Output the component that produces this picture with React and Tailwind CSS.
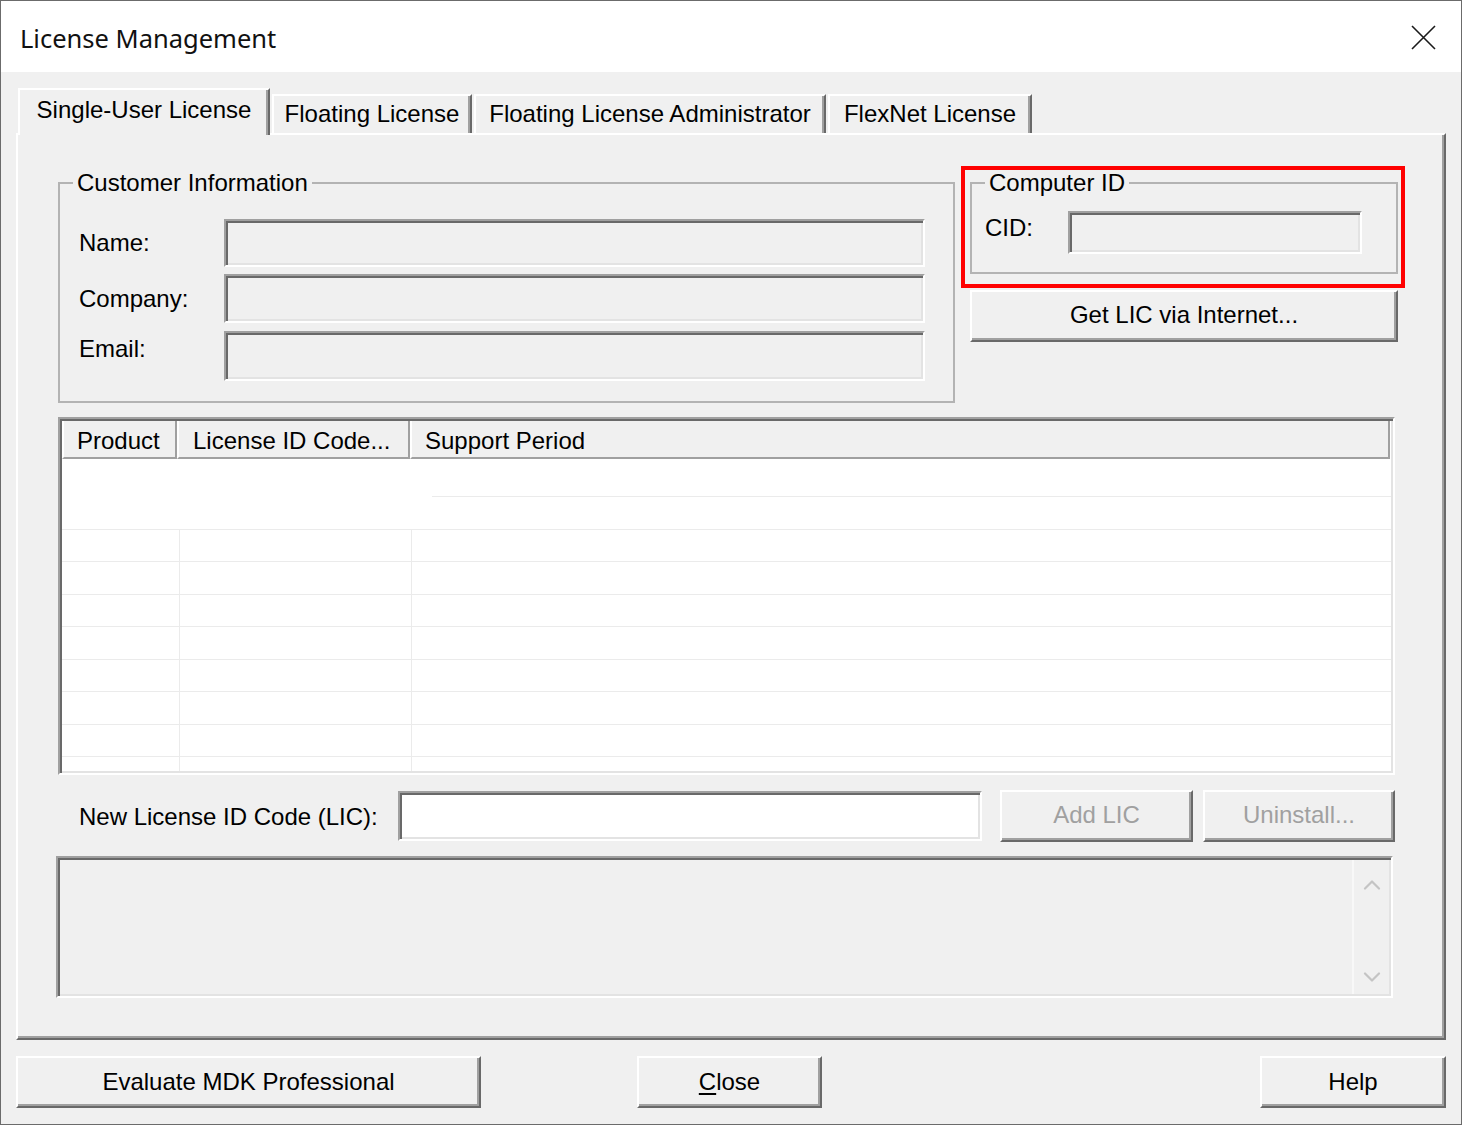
import React from "react";

const raised =
  "bg-[#f0f0f0] border-2 border-t-white border-l-white border-r-[#696969] border-b-[#696969] shadow-[inset_-2px_-2px_0_#a0a0a0]";
const sunken =
  "border-2 border-t-[#a0a0a0] border-l-[#a0a0a0] border-r-white border-b-white shadow-[inset_2px_2px_0_#696969,inset_-2px_-2px_0_#e3e3e3]";

function Button({ className = "", disabled = false, children }) {
  return (
    <div
      className={`${raised} h-[52px] flex items-center justify-center leading-[28px] ${
        disabled ? "text-[#a0a0a0]" : "text-black"
      } ${className}`}
    >
      {children}
    </div>
  );
}

function Field({ className = "" }) {
  return <div className={`${sunken} bg-[#f0f0f0] ${className}`} />;
}

function Chevron({ up }) {
  return (
    <svg width="18" height="11" viewBox="0 0 18 11" fill="none">
      <path
        d={up ? "M2 9.5 L9 2.5 L16 9.5" : "M2 1.5 L9 8.5 L16 1.5"}
        stroke="#c4c4c4"
        strokeWidth="2.2"
        strokeLinecap="round"
        strokeLinejoin="round"
      />
    </svg>
  );
}

export default function App() {
  return (
    <div className="relative w-[1462px] h-[1125px] border border-[#6b6b6b] bg-[#f0f0f0] flex flex-col font-['Liberation_Sans',Arial,sans-serif] text-[24px] text-black overflow-hidden">
      {/* Title bar */}
      <div className="h-[71px] shrink-0 bg-white flex items-center justify-between pl-[19px] pr-[25px]">
        <span className="font-['Noto_Sans',sans-serif] text-[25.5px] leading-[32px] text-[#111] pt-[3px]">
          License Management
        </span>
        <svg width="25" height="25" viewBox="0 0 25 25" className="mt-[1px]">
          <path d="M1 1 L24 24 M24 1 L1 24" stroke="#1a1a1a" strokeWidth="1.6" />
        </svg>
      </div>

      {/* Body */}
      <div className="flex-1 flex flex-col px-[15px] pt-[16px]">
        {/* Tabs */}
        <div className="h-[45px] shrink-0 flex items-end">
          <div className="relative z-10 ml-[2px] -mb-[2px] w-[252px] h-[47px] bg-[#f0f0f0] border-t-2 border-l-2 border-r-2 border-t-white border-l-white border-r-[#696969] shadow-[inset_-2px_0_0_#a0a0a0] pt-[6px] text-center leading-[28px]">
            Single-User License
          </div>
          <div className="ml-[2px] w-[200px] h-[39px] border-t-2 border-l-2 border-r-2 border-t-white border-l-white border-r-[#696969] shadow-[inset_-2px_0_0_#a0a0a0] pt-[4px] text-center leading-[28px]">
            Floating License
          </div>
          <div className="ml-[2px] w-[352px] h-[39px] border-t-2 border-l-2 border-r-2 border-t-white border-l-white border-r-[#696969] shadow-[inset_-2px_0_0_#a0a0a0] pt-[4px] text-center leading-[28px]">
            Floating License Administrator
          </div>
          <div className="ml-[2px] w-[204px] h-[39px] border-t-2 border-l-2 border-r-2 border-t-white border-l-white border-r-[#696969] shadow-[inset_-2px_0_0_#a0a0a0] pt-[4px] text-center leading-[28px]">
            FlexNet License
          </div>
        </div>

        {/* Panel */}
        <div className="h-[907px] shrink-0 bg-[#f0f0f0] border-2 border-t-white border-l-white border-r-[#696969] border-b-[#696969] shadow-[inset_-2px_-2px_0_#a0a0a0] pl-[40px] pt-[34px] flex flex-col">
          {/* Top section */}
          <div className="flex items-start gap-[15px]">
            <fieldset className="w-[897px] border-2 border-[#b3b3b3] pl-[19px] pr-[28px] pt-[22px] pb-[20px]">
              <legend className="-ml-[6px] px-[4px] leading-[28px]">Customer Information</legend>
              <div className="flex flex-col">
                <div className="flex items-center">
                  <span className="w-[145px] leading-[28px]">Name:</span>
                  <Field className="w-[701px] h-[48px]" />
                </div>
                <div className="flex items-center mt-[7px]">
                  <span className="w-[145px] leading-[28px]">Company:</span>
                  <Field className="w-[701px] h-[49px]" />
                </div>
                <div className="flex items-center mt-[8px]">
                  <span className="w-[145px] leading-[28px] mb-[14px]">Email:</span>
                  <Field className="w-[701px] h-[50px]" />
                </div>
              </div>
            </fieldset>

            <div className="w-[428px] flex flex-col">
              <fieldset className="border-2 border-[#b3b3b3] pl-[13px] pt-[14px] pb-[18px]">
                <legend className="ml-0 px-[4px] leading-[28px]">Computer ID</legend>
                <div className="flex items-center">
                  <span className="w-[83px] leading-[28px] mb-[9px]">CID:</span>
                  <Field className="w-[294px] h-[43px]" />
                </div>
              </fieldset>
              <Button className="mt-[16px] w-[428px]">
                <span className="-mt-[3px]">Get LIC via Internet...</span>
              </Button>
            </div>
          </div>

          {/* List view */}
          <div className={`mt-[14px] w-[1337px] h-[358px] ${sunken} p-[2px] flex flex-col`}>
            <div className="h-[38px] shrink-0 flex bg-white">
              <div className="w-[115px] bg-[#f0f0f0] border-l-2 border-l-white border-r-2 border-r-[#a0a0a0] border-b-2 border-b-[#a0a0a0] pl-[13px] pt-[3px] flex items-center leading-[28px]">
                Product
              </div>
              <div className="w-[233px] bg-[#f0f0f0] border-l-2 border-l-white border-r-2 border-r-[#a0a0a0] border-b-2 border-b-[#a0a0a0] pl-[14px] pt-[3px] flex items-center leading-[28px]">
                License ID Code...
              </div>
              <div className="w-[980px] bg-[#f0f0f0] border-l-2 border-l-white border-r-2 border-r-[#a0a0a0] border-b-2 border-b-[#a0a0a0] pl-[13px] pt-[3px] flex items-center leading-[28px]">
                Support Period
              </div>
            </div>
            <div className="flex-1 bg-white flex flex-col overflow-hidden">
              <div className="h-[38px] shrink-0 flex">
                <div className="w-[118px]" />
                <div className="w-[232px]" />
                <div className="flex-1 pl-[20px]">
                  <div className="h-full border-b border-[#ebebeb]" />
                </div>
              </div>
              <div className="h-[32.5px] shrink-0 border-b border-[#ebebeb]" />
              {Array.from({ length: 7 }).map((_, i) => (
                <div key={i} className="h-[32.5px] shrink-0 flex border-b border-[#ebebeb]">
                  <div className="w-[118px] border-r border-[#ebebeb]" />
                  <div className="w-[232px] border-r border-[#ebebeb]" />
                  <div className="flex-1" />
                </div>
              ))}
              <div className="flex-1 flex">
                <div className="w-[118px] border-r border-[#ebebeb]" />
                <div className="w-[232px] border-r border-[#ebebeb]" />
                <div className="flex-1" />
              </div>
            </div>
          </div>

          {/* New LIC row */}
          <div className="mt-[15px] h-[52px] flex items-center">
            <span className="ml-[21px] w-[319px] leading-[28px] mt-[2px]">New License ID Code (LIC):</span>
            <div className={`${sunken} bg-white w-[584px] h-[50px]`} />
            <Button disabled className="ml-[18px] w-[193px]">
              <span className="-mt-[3px]">Add LIC</span>
            </Button>
            <Button disabled className="ml-[10px] w-[192px]">
              <span className="-mt-[3px]">Uninstall...</span>
            </Button>
          </div>

          {/* Message area */}
          <div className={`mt-[14px] -ml-[2px] w-[1337px] h-[142px] ${sunken} bg-[#f0f0f0] p-[2px] flex`}>
            <div className="flex-1" />
            <div className="w-[37px] border-l-2 border-[#f8f8f8] flex flex-col items-center justify-between pt-[19px] pb-[11px]">
              <Chevron up />
              <Chevron />
            </div>
          </div>
        </div>

        {/* Bottom buttons */}
        <div className="mt-[16px] flex">
          <Button className="w-[465px]">Evaluate MDK Professional</Button>
          <Button className="ml-[156px] w-[185px]">
            <span>
              <span className="underline underline-offset-[3px]">C</span>lose
            </span>
          </Button>
          <Button className="ml-auto w-[186px]">Help</Button>
        </div>
      </div>

      {/* Annotation overlay */}
      <div className="absolute left-[960px] top-[165px] w-[444px] h-[122px] border-4 border-[#ff0000] pointer-events-none" />
    </div>
  );
}
